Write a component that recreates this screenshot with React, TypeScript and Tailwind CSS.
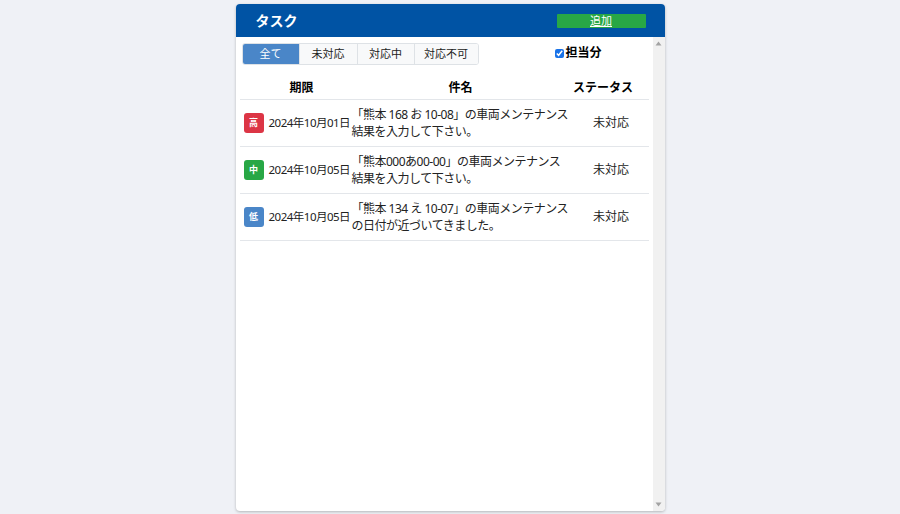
import React from 'react'

type Task = {
  level: '高' | '中' | '低'
  date: string
  lines: string[]
  status: string
}

const TASKS: Task[] = [
  { level: '高', date: '2024年10月01日', lines: ['「熊本 168 お 10-08」の車両メンテナンス', '結果を入力して下さい。'], status: '未対応' },
  { level: '中', date: '2024年10月05日', lines: ['「熊本000あ00-00」の車両メンテナンス', '結果を入力して下さい。'], status: '未対応' },
  { level: '低', date: '2024年10月05日', lines: ['「熊本 134 え 10-07」の車両メンテナンス', 'の日付が近づいてきました。'], status: '未対応' },
]

// 優先度バッジの色
const BADGE: Record<Task['level'], string> = {
  高: 'bg-[#dc3545]',
  中: 'bg-[#28a745]',
  低: 'bg-[#4a86c8]',
}

const TABS = ['全て', '未対応', '対応中', '対応不可']

export default function App() {
  return (
    <div
      className="h-[514px] w-full bg-[#eff1f6] flex justify-center pt-[4px]"
      style={{ fontFamily: '"Noto Sans", "Noto Sans CJK JP", sans-serif' }}
    >
      <div className="w-[429px] h-[507px] bg-white rounded-[4px] shadow-[0_1px_3px_rgba(0,0,0,0.25)] flex flex-col overflow-hidden">
        {/* ヘッダー */}
        <div className="h-[33px] bg-[#0053a4] flex items-center justify-between pl-[20px] pr-[19px] shrink-0">
          <span className="text-white font-bold text-[14px] leading-none">タスク</span>
          <button className="w-[89px] h-[14px] bg-[#28a745] text-white text-[11px] leading-none underline rounded-[1px]">
            追加
          </button>
        </div>

        <div className="flex-1 flex min-h-0">
          {/* 本体 */}
          <div className="flex-1 pl-[4px] pr-[4px] pt-[6px]">
            <div className="flex items-start">
              <div className="ml-[2px] flex h-[22px] border border-[#dee2e6] rounded-[3px] overflow-hidden">
                {TABS.map((t, i) => (
                  <div
                    key={t}
                    className={`h-full flex items-center justify-center text-[11px] ${
                      i === 0 ? 'w-[56px] bg-[#4a86c8] text-white' : 'bg-[#f8f9fa] text-[#222] border-l border-[#dee2e6]'
                    } ${i === 1 ? 'w-[58px]' : ''} ${i === 2 ? 'w-[57px]' : ''} ${i === 3 ? 'w-[64px]' : ''}`}
                  >
                    {t}
                  </div>
                ))}
              </div>
              <label className="ml-[76px] mt-[1px] flex items-center gap-[2px] text-[12px] font-bold text-black">
                <input type="checkbox" defaultChecked className="w-[9px] h-[9px] accent-[#1a73e8]" />
                担当分
              </label>
            </div>

            {/* 表 */}
            <div className="mt-[11px] text-[#222]">
              <div className="flex h-[24px] items-center border-b border-[#e3e6ea] text-[12px] font-bold text-black">
                <div className="w-[124px] text-center">期限</div>
                <div className="w-[194px] text-center">件名</div>
                <div className="flex-1 text-center">ステータス</div>
              </div>
              {TASKS.map((t, i) => (
                <div key={i} className="flex h-[47px] items-center border-b border-[#e3e6ea]">
                  <div className="w-[112px] shrink-0 flex items-center pl-[4px]">
                    <span
                      className={`w-[20px] h-[20px] shrink-0 rounded-[3px] ${BADGE[t.level]} text-white text-[9px] font-bold flex items-center justify-center`}
                    >
                      {t.level}
                    </span>
                    <span className="ml-[5px] text-[11.5px] tracking-[-0.5px] whitespace-nowrap">{t.date}</span>
                  </div>
                  <div className="w-[222px] shrink-0 text-[12px] tracking-[-0.5px] leading-[17px]">
                    {t.lines.map((l) => (
                      <div key={l} className="whitespace-nowrap">{l}</div>
                    ))}
                  </div>
                  <div className="flex-1 text-center text-[12px]">{t.status}</div>
                </div>
              ))}
            </div>
          </div>

          {/* スクロールバー */}
          <div className="w-[12px] bg-[#f1f1f1] flex flex-col items-center justify-between py-[4px] shrink-0">
            <svg width="7" height="5" viewBox="0 0 7 5">
              <path d="M3.5 0.5 L6.5 4.5 L0.5 4.5 Z" fill="#a3a3a3" />
            </svg>
            <svg width="7" height="5" viewBox="0 0 7 5">
              <path d="M0.5 0.5 L6.5 0.5 L3.5 4.5 Z" fill="#a3a3a3" />
            </svg>
          </div>
        </div>
      </div>
    </div>
  )
}
